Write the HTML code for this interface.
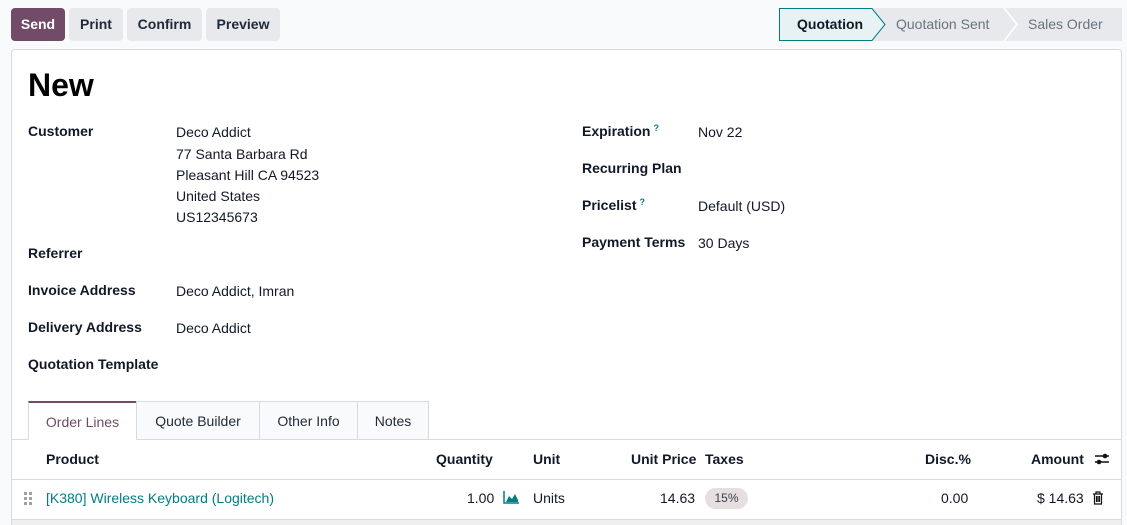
<!DOCTYPE html>
<html><head><style>
*{margin:0;padding:0;box-sizing:border-box}
html,body{width:1127px;height:525px;overflow:hidden}
body{background:#f9fafb;font-family:"Liberation Sans","DejaVu Sans",sans-serif;font-size:14px;color:#111827;position:relative}
.a{position:absolute;white-space:nowrap}
.btn{position:absolute;top:8px;height:33px;border-radius:4px;background:#e7e9ed;font-weight:bold;font-size:14px;line-height:33px;text-align:center;color:#1f2937}
.b{font-weight:bold}
.card{position:absolute;left:11px;top:49px;width:1111px;height:476px;background:#fff;border:1px solid #d8dadd;border-bottom:none;border-radius:4px 4px 0 0}
.tab{position:absolute;top:401px;height:39px;line-height:38px;text-align:center;border:1px solid #d8dadd;background:#f9fafb;color:#1f2937;font-size:14px}
.q{color:#017e84;font-size:9px;vertical-align:top;margin-left:3px}
</style></head><body>
<div class="btn" style="left:11px;width:54px;background:#714b67;color:#fff">Send</div>
<div class="btn" style="left:69px;width:54px">Print</div>
<div class="btn" style="left:127px;width:75px">Confirm</div>
<div class="btn" style="left:206px;width:74px">Preview</div>

<svg class="a" style="left:779px;top:8px" width="343" height="33">
<rect x="0" y="0" width="343" height="33" fill="#e7e9ed"/>
<polygon points="0.5,0.5 93,0.5 106,16.5 93,32.5 0.5,32.5" fill="#e6f2f3" stroke="#017e84"/>
<polyline points="225,0 238,16.5 225,33" fill="none" stroke="#fff" stroke-width="1.5"/>
</svg>
<div class="a b" style="left:797px;top:16px">Quotation</div>
<div class="a" style="left:896px;top:16px;color:#6b7280">Quotation Sent</div>
<div class="a" style="left:1028px;top:16px;color:#6b7280">Sales Order</div>

<div class="card"></div>
<div class="a b" style="left:28px;top:67px;font-size:32px;color:#000">New</div>

<div class="a b" style="left:28px;top:123px">Customer</div>
<div class="a" style="left:176px;top:124px">Deco Addict</div>
<div class="a" style="left:176px;top:144px;line-height:21px">77 Santa Barbara Rd<br>Pleasant Hill CA 94523<br>United States<br>US12345673</div>
<div class="a b" style="left:28px;top:245px">Referrer</div>
<div class="a b" style="left:28px;top:282px">Invoice Address</div>
<div class="a" style="left:176px;top:283px">Deco Addict, Imran</div>
<div class="a b" style="left:28px;top:319px">Delivery Address</div>
<div class="a" style="left:176px;top:320px">Deco Addict</div>
<div class="a b" style="left:28px;top:356px">Quotation Template</div>

<div class="a b" style="left:582px;top:123px">Expiration<span class="q">?</span></div>
<div class="a" style="left:698px;top:124px">Nov 22</div>
<div class="a b" style="left:582px;top:160px">Recurring Plan</div>
<div class="a b" style="left:582px;top:197px">Pricelist<span class="q">?</span></div>
<div class="a" style="left:698px;top:198px">Default (USD)</div>
<div class="a b" style="left:582px;top:234px">Payment Terms</div>
<div class="a" style="left:698px;top:235px">30 Days</div>

<div class="a" style="left:12px;top:439px;width:1109px;height:1px;background:#d8dadd"></div>
<div class="tab" style="left:28px;width:109px;background:#fff;border-bottom-color:#fff;border-top:2px solid #714b67;color:#714b67">Order Lines</div>
<div class="tab" style="left:136px;width:124px">Quote Builder</div>
<div class="tab" style="left:259px;width:99px">Other Info</div>
<div class="tab" style="left:357px;width:72px">Notes</div>

<div class="a b" style="left:46px;top:451px">Product</div>
<div class="a b" style="left:436px;top:451px">Quantity</div>
<div class="a b" style="left:533px;top:451px">Unit</div>
<div class="a b" style="left:631px;top:451px">Unit Price</div>
<div class="a b" style="left:705px;top:451px">Taxes</div>
<div class="a b" style="left:925px;top:451px">Disc.%</div>
<div class="a b" style="left:1031px;top:451px">Amount</div>
<svg class="a" style="left:1094px;top:452px" width="16" height="14"><path d="M1 4H15M1 10H15" stroke="#111" stroke-width="1.5"/><circle cx="11" cy="4" r="2.3" fill="#111"/><circle cx="5" cy="10" r="2.3" fill="#111"/></svg>
<div class="a" style="left:12px;top:479px;width:1109px;height:1px;background:#d8dadd"></div>

<svg class="a" style="left:24px;top:492px" width="10" height="14"><g fill="#9ca3af"><rect x="0" y="0" width="3" height="3"/><rect x="5" y="0" width="3" height="3"/><rect x="0" y="5" width="3" height="3"/><rect x="5" y="5" width="3" height="3"/><rect x="0" y="10" width="3" height="3"/><rect x="5" y="10" width="3" height="3"/></g></svg>
<div class="a" style="left:46px;top:490px;color:#017e84">[K380] Wireless Keyboard (Logitech)</div>
<div class="a" style="left:467px;top:490px">1.00</div>
<svg class="a" style="left:503px;top:491px" width="16" height="13"><path d="M1 0V12H16" stroke="#017e84" stroke-width="1.5" fill="none"/><path d="M3 11L6 5L9 8L12 3L15 9V11Z" fill="#017e84"/></svg>
<div class="a" style="left:533px;top:490px">Units</div>
<div class="a" style="left:660px;top:490px">14.63</div>
<div class="a" style="left:705px;top:488px;width:43px;height:21px;border-radius:11px;background:#e7dfdf;font-size:12px;line-height:21px;text-align:center;color:#374151">15%</div>
<div class="a" style="left:941px;top:490px">0.00</div>
<div class="a" style="left:1037px;top:490px">$ 14.63</div>
<svg class="a" style="left:1092px;top:491px" width="12" height="14"><path d="M1 3H11M4 3V1H8V3M2.5 3V13H9.5V3M4.5 5V11M6 5V11M7.5 5V11" stroke="#111" stroke-width="1.2" fill="none"/></svg>
<div class="a" style="left:12px;top:519px;width:1109px;height:6px;background:#eeeff1;border-top:1px solid #d8dadd"></div>
</body></html>
